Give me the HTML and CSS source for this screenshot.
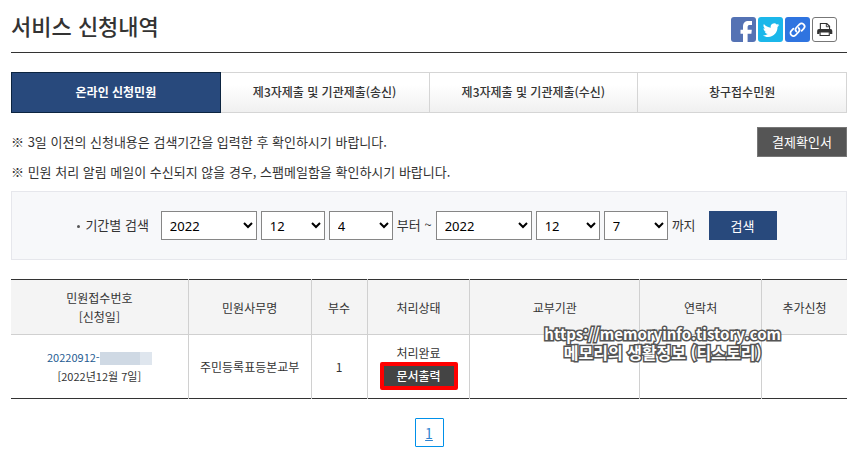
FILE: index.html
```html
<!DOCTYPE html>
<html lang="ko">
  <head>
    <title>서비스 신청내역</title>
    <meta charset="utf-8" />
    <link rel="stylesheet" href="styles.css">
  </head>
  <body>
    <div class="header">
      <h1>서비스 신청내역</h1>
      <div class="sns">
        <a href="#" class="facebook" aria-label="페이스북">
          <svg viewBox="0 0 24 25"><path d="M11.5 25v-8.200H9v-4h2.500V10c0-3.900 1.900-5.900 5.600-5.900h3.400v4h-2c-1.700 0-2.400.6-2.400 2.100v2.600h4.200l-.4 4h-3.800V25z" fill="#fff"/></svg>
        </a>
        <a href="#" class="twitter" aria-label="트위터">
          <svg viewBox="0 0 24 25"><path d="M20.800 8.100c-.6.300-1.200.5-1.900.5.700-.4 1.200-1 1.400-1.800-.6.400-1.400.7-2.100.8a3.400 3.400 0 0 0-5.900 3.100c-2.700-.1-5.300-1.500-6.900-3.600-.9 1.500-.4 3.500 1.100 4.500-.5 0-1-.2-1.500-.4 0 1.600 1.100 3 2.700 3.400-.5.100-1 .1-1.500 0 .4 1.400 1.700 2.300 3.100 2.400a7 7 0 0 1-5 1.400c1.500.9 3.300 1.500 5.200 1.500 6.200 0 9.700-5.200 9.500-9.900.7-.5 1.300-1.100 1.800-1.900z" fill="#fff"/></svg>
        </a>
        <a href="#" class="link" aria-label="주소복사">
          <svg viewBox="0 0 24 25" fill="none" stroke="#fff" stroke-width="1.700" stroke-linecap="round"><path d="M11 14.700a3 3 0 0 1-.1-4.200l3-3.100a3 3 0 0 1 4.300 4.200l-2.100 2.200"/><path d="M13 10.800a3 3 0 0 1 .1 4.200l-3 3.100a3 3 0 0 1-4.300-4.200l2.100-2.200"/></svg>
        </a>
        <a href="#" class="print" aria-label="인쇄">
          <svg viewBox="0 0 24 25"><path d="M7.500 12V6h7l3 3v3" fill="none" stroke="#333" stroke-width="1.200"/><path d="M14 6v3.500h3.500" fill="none" stroke="#333"/><path d="M6 12h12.500a2 2 0 0 1 2 2v3.500H18v-1.800H6.500v1.800H4V14a2 2 0 0 1 2-2z" fill="#333"/><path d="M7.200 15v4h10v-4" fill="none" stroke="#333" stroke-width="1.200"/></svg>
        </a>
      </div>
    </div>

    <ul class="tab">
      <li class="on"><a href="#">온라인 신청민원</a></li>
      <li><a href="#">제3자제출 및 기관제출(송신)</a></li>
      <li><a href="#">제3자제출 및 기관제출(수신)</a></li>
      <li><a href="#">창구접수민원</a></li>
    </ul>

    <div class="info">
      <div class="txt">
        <p>※ 3일 이전의 신청내용은 검색기간을 입력한 후 확인하시기 바랍니다.</p>
        <p>※ 민원 처리 알림 메일이 수신되지 않을 경우, 스팸메일함을 확인하시기 바랍니다.</p>
      </div>
      <button type="button" class="btn-pay">결제확인서</button>
    </div>

    <form class="search">
      <label for="y1">기간별 검색</label>
      <select id="y1" class="year"><option>2022</option></select>
      <select aria-label="시작 월"><option>12</option></select>
      <select aria-label="시작 일"><option>4</option></select>
      <span>부터 ~</span>
      <select class="year" aria-label="종료 년"><option>2022</option></select>
      <select aria-label="종료 월"><option>12</option></select>
      <select aria-label="종료 일"><option>7</option></select>
      <span>까지</span>
      <button type="button">검색</button>
    </form>

    <div class="list">
      <table>
        <colgroup>
          <col class="c1"><col class="c2"><col class="c3"><col class="c4"><col class="c5"><col class="c6"><col class="c7">
        </colgroup>
        <thead>
          <tr>
            <th>민원접수번호<br>[신청일]</th>
            <th>민원사무명</th>
            <th>부수</th>
            <th>처리상태</th>
            <th>교부기관</th>
            <th>연락처</th>
            <th>추가신청</th>
          </tr>
        </thead>
        <tbody>
          <tr>
            <td class="no"><a href="#">20220912-<i class="mask"></i></a><br>[2022년12월 7일]</td>
            <td>주민등록표등본교부</td>
            <td>1</td>
            <td>처리완료<button type="button" class="btn-doc">문서출력</button></td>
            <td></td>
            <td></td>
            <td></td>
          </tr>
        </tbody>
      </table>
      <div class="mark">
        <p class="url">https://memoryinfo.tistory.com</p>
        <p>메모리의 생활정보 (티스토리)</p>
      </div>
    </div>

    <div class="paging"><a href="#">1</a></div>
  </body>
</html>
```
FILE: styles.css
```css
*{
	margin:0;
	padding:0;
	box-sizing:border-box;
}
body{
	padding:0 16px 16px 11px;
	font-family:"Noto Sans CJK KR",sans-serif;
	font-size:13px;
	color:#333;
	background:#fff;
}
a{
	color:inherit;
	text-decoration:none;
}
button{
	font-family:inherit;
	border:0;
	color:#fff;
	cursor:pointer;
}
.header{
	display:flex;
	justify-content:space-between;
	height:53px;
	border-bottom:1px solid #333;
}
h1{
	font-size:22px;
	font-weight:500;
	line-height:50px;
}
.sns{
	display:flex;
	gap:2px;
	padding:17px 10px 0 0;
}
.sns a{
	width:25px;
	height:25px;
	border-radius:3px;
	overflow:hidden;
}
.sns svg{
	display:block;
	width:100%;
	height:100%;
}
.facebook{
	background:#5472b4;
}
.twitter{
	background:#1bb7ea;
}
.link{
	background:#2f74e0;
}
.sns .print{
	border:1px solid #777;
}
.tab{
	display:flex;
	margin-top:19px;
	list-style:none;
}
.tab li{
	flex:1 1 0;
	height:41px;
	border:1px solid #d5d5d5;
	border-left:0;
	background:linear-gradient(#fff 30%,#f0f0f0);
	text-align:center;
	font-size:12px;
	font-weight:500;
	line-height:38px;
}
.tab a{
	display:block;
}
.tab .on{
	border:1px solid #0c2440;
	background:#28497c;
	color:#fff;
	font-weight:700;
}
.info{
	display:flex;
	justify-content:space-between;
	padding:14px 0 4px;
}
.info p{
	line-height:30px;
}
.btn-pay{
	width:90px;
	height:30px;
	background:#555;
	border:1px solid #777;
	font-size:13px;
	line-height:26px;
}
.search{
	display:flex;
	align-items:center;
	justify-content:center;
	gap:4px;
	height:69px;
	padding-right:4px;
	border:1px solid #e6e7ec;
	background:#f7f8fa;
}
.search label,.search span{
	padding-bottom:2px;
}
.search label{
	margin-right:8px;
}
.search label:before{
	content:"";
	display:inline-block;
	width:3px;
	height:3px;
	margin-right:5px;
	border-radius:50%;
	background:#555;
	vertical-align:middle;
}
.search select{
	width:64px;
	height:29px;
	padding-left:4px;
	border:1px solid #868686;
	background:#fff;
	font-family:"Noto Sans",sans-serif;
	font-size:13px;
	color:#000;
}
.search .year{
	width:96px;
}
.search button{
	width:68px;
	height:29px;
	margin-left:9px;
	background:#28497c;
	font-size:13px;
	line-height:26px;
}
.list{
	position:relative;
	margin-top:19px;
}
table{
	width:100%;
	table-layout:fixed;
	border-collapse:collapse;
	border-top:1px solid #333;
	border-bottom:1px solid #333;
	text-align:center;
	font-size:12px;
	line-height:19px;
}
.c1{
	width:21.2%;
}
.c2{
	width:14.7%;
}
.c3{
	width:6.7%;
}
.c4{
	width:12.3%;
}
.c5{
	width:20.3%;
}
.c6{
	width:14.6%;
}
.c7{
	width:10.2%;
}
th{
	height:55px;
	border-bottom:1px solid #d0d0d0;
	background:#f4f4f4;
	font-weight:400;
}
td{
	height:64px;
}
th+th,td+td{
	border-left:1px solid #d0d0d0;
}
.no{
	font-size:11px;
}
.no a{
	color:#1f5c92;
}
.mask{
	display:inline-block;
	width:52px;
	height:13px;
	background:linear-gradient(90deg,#cfd9e4 40px,#dfe6ee 40px);
	vertical-align:middle;
}
.btn-doc{
	display:block;
	width:78px;
	height:28px;
	margin:0 auto;
	border:4px solid #f00;
	border-radius:2px;
	background:#444;
	font-size:12px;
	font-weight:500;
	line-height:18px;
}
.mark{
	position:absolute;
	top:46px;
	right:66px;
	text-align:center;
	font-size:16px;
	font-weight:700;
	line-height:18px;
	color:#fff;
	-webkit-text-stroke:3px #555;
	paint-order:stroke fill;
}
.mark .url{
	font-size:15px;
}
.paging{
	display:flex;
	justify-content:center;
	margin-top:19px;
}
.paging a{
	width:29px;
	height:29px;
	border:1px solid #0090e9;
	border-radius:1px;
	color:#2f84d0;
	text-align:center;
	text-decoration:underline;
	font-size:14px;
	line-height:28px;
}
```
